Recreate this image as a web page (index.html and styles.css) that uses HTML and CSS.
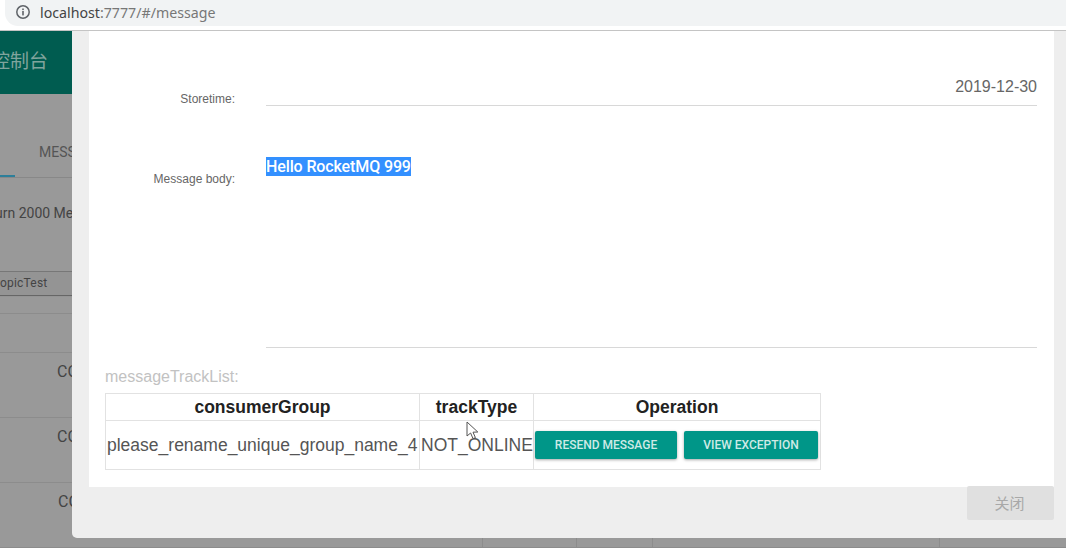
FILE: index.html
```html
<!DOCTYPE html>
<html lang="en">
<head>
<meta charset="utf-8">
<title>RocketMQ message</title>
<link rel="stylesheet" href="styles.css">
</head>
<body>
<div class="browser-bar">
  <div class="address">
    <svg class="info" width="16" height="16" viewBox="0 0 16 16"><circle cx="8" cy="8" r="6.2" fill="none" stroke="#5f6368" stroke-width="1.5"/><rect x="7.2" y="7" width="1.6" height="4.4" fill="#5f6368"/><rect x="7.2" y="4.5" width="1.6" height="1.6" fill="#5f6368"/></svg>
    <span class="host">localhost</span><span class="path">:7777/#/message</span>
  </div>
</div>
<div class="app">
  <div class="backdrop-page">
    <div class="brand"><span>控制台</span></div>
    <div class="tabs"><span class="tab-active"></span><span class="tab">MESSAGE</span></div>
    <div class="hint">urn 2000 Messages</div>
    <div class="select">opicTest</div>
    <div class="thead"></div>
    <div class="row"><span class="cell first">CO</span><span class="cell c2"></span><span class="cell c3"></span><span class="cell c4"></span><span class="cell c5"></span></div>
    <div class="row"><span class="cell first">CO</span><span class="cell c2"></span><span class="cell c3"></span><span class="cell c4"></span><span class="cell c5"></span></div>
    <div class="row"><span class="cell first third">CO</span><span class="cell c2"></span><span class="cell c3"></span><span class="cell c4"></span><span class="cell c5"></span></div>
  </div>
  <div class="modal">
    <div class="panel">
      <div class="field">
        <label class="field-label storetime">Storetime:</label>
        <div class="field-value single">2019-12-30</div>
      </div>
      <div class="field body-field">
        <label class="field-label body-label">Message body:</label>
        <div class="field-value multi"><span class="selected">Hello RocketMQ 999</span></div>
      </div>
      <div class="track-title">messageTrackList:</div>
      <table class="track">
        <thead>
          <tr><th class="col-group">consumerGroup</th><th class="col-type">trackType</th><th class="col-op">Operation</th></tr>
        </thead>
        <tbody>
          <tr>
            <td>please_rename_unique_group_name_4</td>
            <td>NOT_ONLINE</td>
            <td class="ops"><button class="btn btn-resend">RESEND MESSAGE</button><button class="btn btn-view">VIEW EXCEPTION</button></td>
          </tr>
        </tbody>
      </table>
    </div>
    <div class="modal-footer"><button class="close-btn">关闭</button></div>
  </div>
  <svg class="cursor" width="15" height="20" viewBox="0 0 15 20"><path d="M1 1 L1 15 L4.6 12 L7 17.6 L9.4 16.6 L7 11.2 L11.8 11 Z" fill="#fff" stroke="#555" stroke-width="1"/></svg>
</div>
</body>
</html>
```
FILE: styles.css
```css
* { box-sizing: border-box; }
html, body { margin: 0; padding: 0; height: 100%; overflow: hidden; }
body { width: 1066px; height: 548px; background: #fff; font-family: "Liberation Sans", "Noto Sans CJK SC", sans-serif; }

.browser-bar { height: 31px; background: #fff; border-bottom: 1px solid #c4c4c4; padding-left: 5px; }
.address { height: 26px; background: #f1f3f4; border-radius: 0 0 0 13px; display: flex; align-items: center; padding: 0 0 2px 10px; font: 14.2px "Noto Sans", sans-serif; }
.info { margin-right: 9px; flex: none; }
.host { color: #444; }
.path { color: #777; }

.app { position: relative; height: 517px; background: #999; overflow: hidden; color: #444; }
.backdrop-page { height: 517px; }
.brand { height: 63px; width: 72px; background: #005c50; color: #80a49d; font-size: 19px; display: flex; justify-content: flex-end; align-items: center; padding: 0 24px 6px 0; white-space: nowrap; }
.tabs { height: 84px; border-bottom: 1px solid #888; position: relative; padding: 50px 0 0 39px; font: 14px Roboto, sans-serif; color: #555; white-space: nowrap; }
.tab-active { position: absolute; left: 0; bottom: 0; width: 15px; height: 2px; background: #2d7f9a; }
.hint { height: 93px; padding-top: 27px; margin-left: -5px; font: 14px/16px Roboto, sans-serif; color: #444; white-space: nowrap; }
.select { height: 25px; border-top: 1px solid #777; border-bottom: 1px solid #666; background: #949494; font: 12px/23px Roboto, sans-serif; letter-spacing: .2px; color: #444; }
.thead { height: 57px; background: linear-gradient(#8f8f8f 0, #999 1px, #999 17px, #8c8c8c 17px, #8c8c8c 18px, #999 18px); border-bottom: 1px solid #8c8c8c; }
.row { height: 65px; border-bottom: 1px solid #8c8c8c; display: flex; }
.cell { height: 100%; border-right: 1px solid #8c8c8c; }
.first { width: 483px; padding: 10px 0 0 57px; font: 16px/18px Roboto, sans-serif; color: #444; }
.third { padding-left: 58px; }
.c2 { width: 94px; }
.c3 { width: 76px; }
.c4 { width: 287px; }
.c5 { flex: 1; border-right: 0; }

.modal { position: absolute; left: 72px; top: 0; right: 0; height: 507px; background: #eee; border-radius: 0 0 0 5px; padding: 0 12px 0 17px; }
.panel { height: 456px; background: #fff; padding: 45px 17px 0 16px; }
.field { display: flex; }
.field-label { width: 130px; margin-right: 31px; text-align: right; font-size: 12px; color: #666; flex: none; }
.storetime { padding-top: 16px; line-height: 14px; }
.field-value { flex: 1; color: #666; font-size: 16px; border-bottom: 1px solid #d8d8d8; }
.single { height: 30px; text-align: right; line-height: 22px; }
.body-field { margin-top: 50px; }
.body-label { padding-top: 16px; line-height: 14px; }
.multi { height: 192px; line-height: 19px; padding-top: 1px; }
.selected { background: #3390ff; color: #fff; font: 500 16px/19px Roboto, sans-serif; letter-spacing: -0.12px; display: inline-block; }

.track-title { color: #c2c2c2; font-size: 16px; line-height: 20px; margin-top: 19px; margin-bottom: -1px; }
.track { border-collapse: collapse; margin-top: 7px; width: 715px; table-layout: fixed; color: #555; }
.track th, .track td { border: 1px solid #e2e2e2; padding: 0 1px; white-space: nowrap; }
.track th { height: 27px; font-size: 17.5px; font-weight: 700; color: #222; text-align: center; }
.track td { height: 49px; font-size: 17.5px; }
.col-group { width: 314px; }
.col-type { width: 114px; }
.col-op { width: 287px; }
.track td.ops { padding: 0 0 0 1px; }
.btn { height: 28px; border: 0; border-radius: 2px; background: #009688; color: #cfeae6; font: 500 12px Roboto, sans-serif; padding: 0; box-shadow: 0 1px 3px rgba(0,0,0,.35); vertical-align: middle; }
.btn-resend { width: 142px; margin-right: 7px; }
.btn-view { width: 134px; }

.modal-footer { display: flex; justify-content: flex-end; }
.close-btn { width: 87px; height: 34px; border: 0; border-radius: 2px; background: #e0e0e0; color: #a8a8a8; font: 15px "Noto Sans CJK SC", sans-serif; padding: 0 2px 2px 0; margin-top: -1px; }

.cursor { position: absolute; left: 466px; top: 390px; }
```
